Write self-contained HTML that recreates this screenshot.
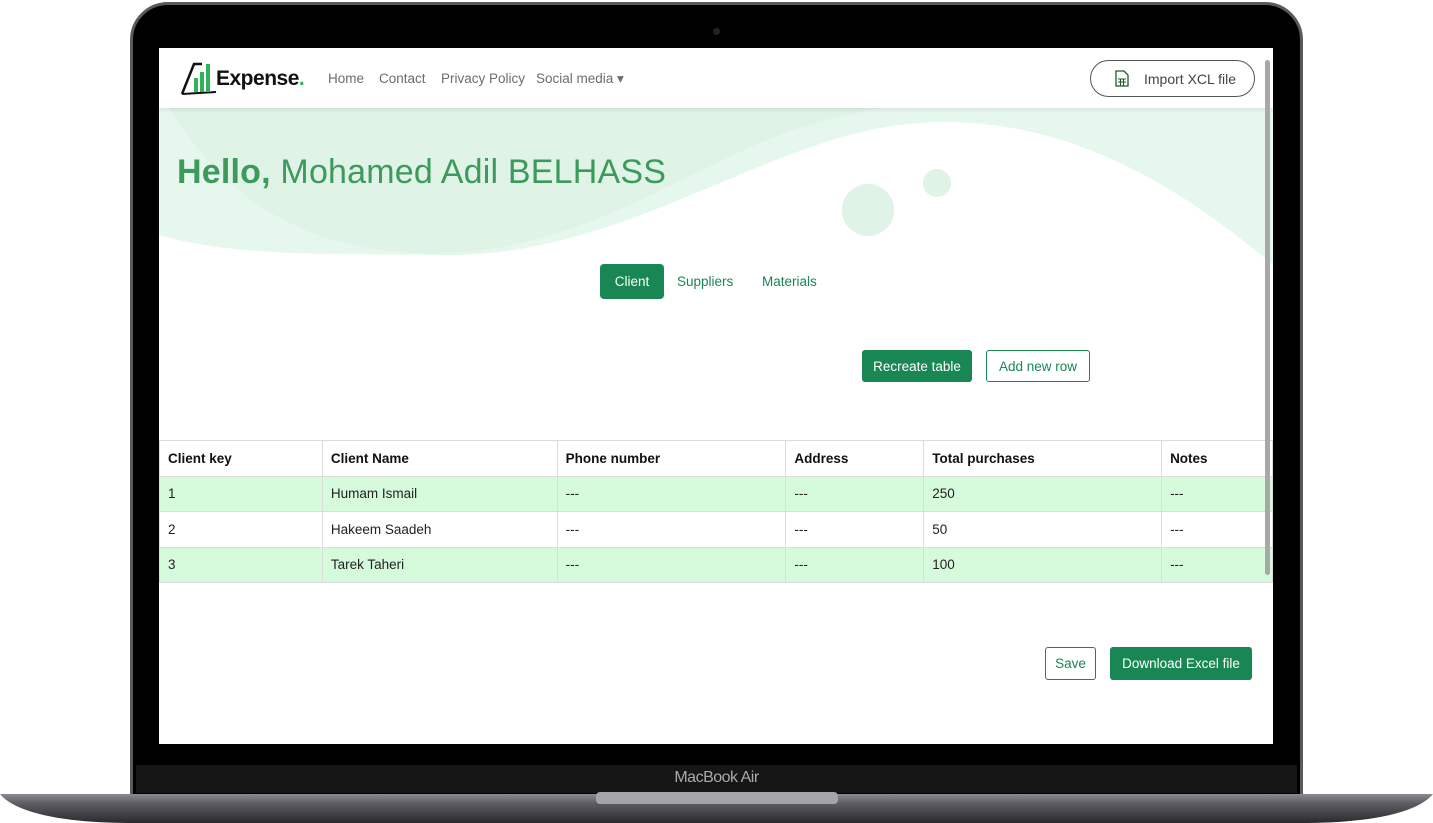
<!DOCTYPE html>
<html><head><meta charset="utf-8"><style>
*{margin:0;padding:0;box-sizing:border-box}
body{width:1433px;height:823px;background:#fff;position:relative;overflow:hidden;font-family:"Liberation Sans",sans-serif}
.abs{position:absolute}
.lid{left:130px;top:2px;width:1173px;height:800px;background:#000;border-radius:38px 38px 0 0;border:3px solid #5a5a5e}
.screen{left:159px;top:48px;width:1114px;height:696px;background:#fff;overflow:hidden}
.nav a{position:absolute;top:23px;font-size:13.5px;color:#6c6c6c}
.btn{position:absolute;font-size:13.5px;display:flex;align-items:center;justify-content:center;border-radius:3px}
.g{background:#198754;color:#fff}
.o{border:1px solid #198754;color:#198754;background:#fff}
table{position:absolute;left:0;top:392px;border-collapse:collapse;font-size:13.5px;color:#222}
td,th{border:1px solid #dcdcdc;height:35.5px;padding:0 8px;text-align:left;vertical-align:middle}
th{font-weight:bold;color:#111}
tr.gr td{background:#d5fbdc}
</style></head><body>
<div class="abs lid"></div>
<div class="abs" style="left:713px;top:28px;width:7px;height:7px;border-radius:50%;background:#222"></div>
<div class="abs screen">
  <svg class="abs" style="left:0;top:60px" width="1114" height="220">
    <rect width="1114" height="220" fill="#fff"/>
    <path d="M0 0 H1114 V157 C1000 60 880 0 740 17 C600 35 460 150 282 147 C180 145 80 150 0 127 Z" fill="#e6f7ee"/>
    <path d="M10 0 C60 80 130 140 260 145 C420 150 520 60 640 20 C680 8 700 4 720 0 Z" fill="#dcf1e4" opacity=".7"/>
    <ellipse cx="709" cy="102" rx="26" ry="26" fill="#dff3e7"/>
    <ellipse cx="778" cy="75" rx="14" ry="14" fill="#dff3e7"/>
  </svg>
  <div class="abs" style="left:0;top:0;width:1114px;height:60px;background:#fff;box-shadow:0 2px 4px rgba(0,0,0,.08)"></div>
  <svg class="abs" style="left:21px;top:12px" width="40" height="36">
    <path d="M2 34 L14 4 L22 4" stroke="#111" stroke-width="2.5" fill="none"/>
    <path d="M2 34 L36 32" stroke="#111" stroke-width="2" fill="none"/>
    <rect x="14" y="18" width="4" height="14" fill="#2fb35a"/>
    <rect x="20" y="12" width="4" height="20" fill="#2fb35a"/>
    <rect x="26" y="4" width="4" height="28" fill="#2fb35a"/>
  </svg>
  <div class="abs" style="left:57px;top:19px;font-size:21px;font-weight:bold;color:#111;letter-spacing:-.5px">Expense<span style="color:#2fb35a">.</span></div>
  <div class="nav"><a style="left:169px">Home</a><a style="left:220px">Contact</a><a style="left:282px">Privacy Policy</a><a style="left:377px">Social media ▾</a></div>
  <div class="abs" style="left:931px;top:12px;width:165px;height:37px;border:1px solid #555;border-radius:19px;font-size:14px;color:#444;display:flex;align-items:center;padding-left:24px">
    <svg width="14" height="17" style="margin-right:15px"><path d="M1 1 H9 L13 5 V16 H1 Z" stroke="#1e5a2a" fill="none" stroke-width="1.3"/><path d="M3 9 H11 M3 12 H11 M5.5 9 V16 M8.5 9 V16" stroke="#1e5a2a" stroke-width="1.1"/></svg>Import XCL file</div>
  <div class="abs" style="left:18px;top:105px;font-size:34px;color:#3e9a5c;letter-spacing:.2px"><b>Hello,</b> Mohamed Adil BELHASS</div>
  <div class="btn g" style="left:441px;top:216px;width:64px;height:35px;border-radius:4px">Client</div>
  <div class="abs" style="left:518px;top:226px;font-size:13.5px;color:#198754">Suppliers</div>
  <div class="abs" style="left:603px;top:226px;font-size:13.5px;color:#198754">Materials</div>
  <div class="btn g" style="left:703px;top:302px;width:110px;height:32px">Recreate table</div>
  <div class="btn o" style="left:827px;top:302px;width:104px;height:32px">Add new row</div>
  <table>
    <tr><th style="width:163px">Client key</th><th style="width:235px">Client Name</th><th style="width:229px">Phone number</th><th style="width:138px">Address</th><th style="width:238px">Total purchases</th><th style="width:111px">Notes</th></tr>
    <tr class="gr"><td>1</td><td>Humam Ismail</td><td>---</td><td>---</td><td>250</td><td>---</td></tr>
    <tr><td>2</td><td>Hakeem Saadeh</td><td>---</td><td>---</td><td>50</td><td>---</td></tr>
    <tr class="gr"><td>3</td><td>Tarek Taheri</td><td>---</td><td>---</td><td>100</td><td>---</td></tr>
  </table>
  <div class="btn o" style="left:886px;top:599px;width:51px;height:33px">Save</div>
  <div class="btn g" style="left:951px;top:599px;width:142px;height:33px">Download Excel file</div>
  <div class="abs" style="left:1106px;top:12px;width:5px;height:515px;background:#a8a8a8;border-radius:3px"></div>
</div>
<div class="abs" style="left:136px;top:765px;width:1161px;height:28px;background:#161616"></div>
<div class="abs" style="left:0;top:769px;width:1433px;text-align:center;font-size:16px;color:#aaa;letter-spacing:-.5px">MacBook Air</div>
<svg class="abs" style="left:0;top:792px" width="1433" height="31">
  <defs><linearGradient id="b" x1="0" y1="0" x2="0" y2="1"><stop offset="0" stop-color="#8a8a90"/><stop offset=".35" stop-color="#5a5a60"/><stop offset="1" stop-color="#2a2a2e"/></linearGradient></defs>
  <path d="M0 2 H1433 C1420 18 1380 31 1300 31 H133 C53 31 13 18 0 2 Z" fill="url(#b)"/>
  <rect x="596" y="0" width="242" height="12" rx="4" fill="#a4a4aa"/>
</svg>
</body></html>
